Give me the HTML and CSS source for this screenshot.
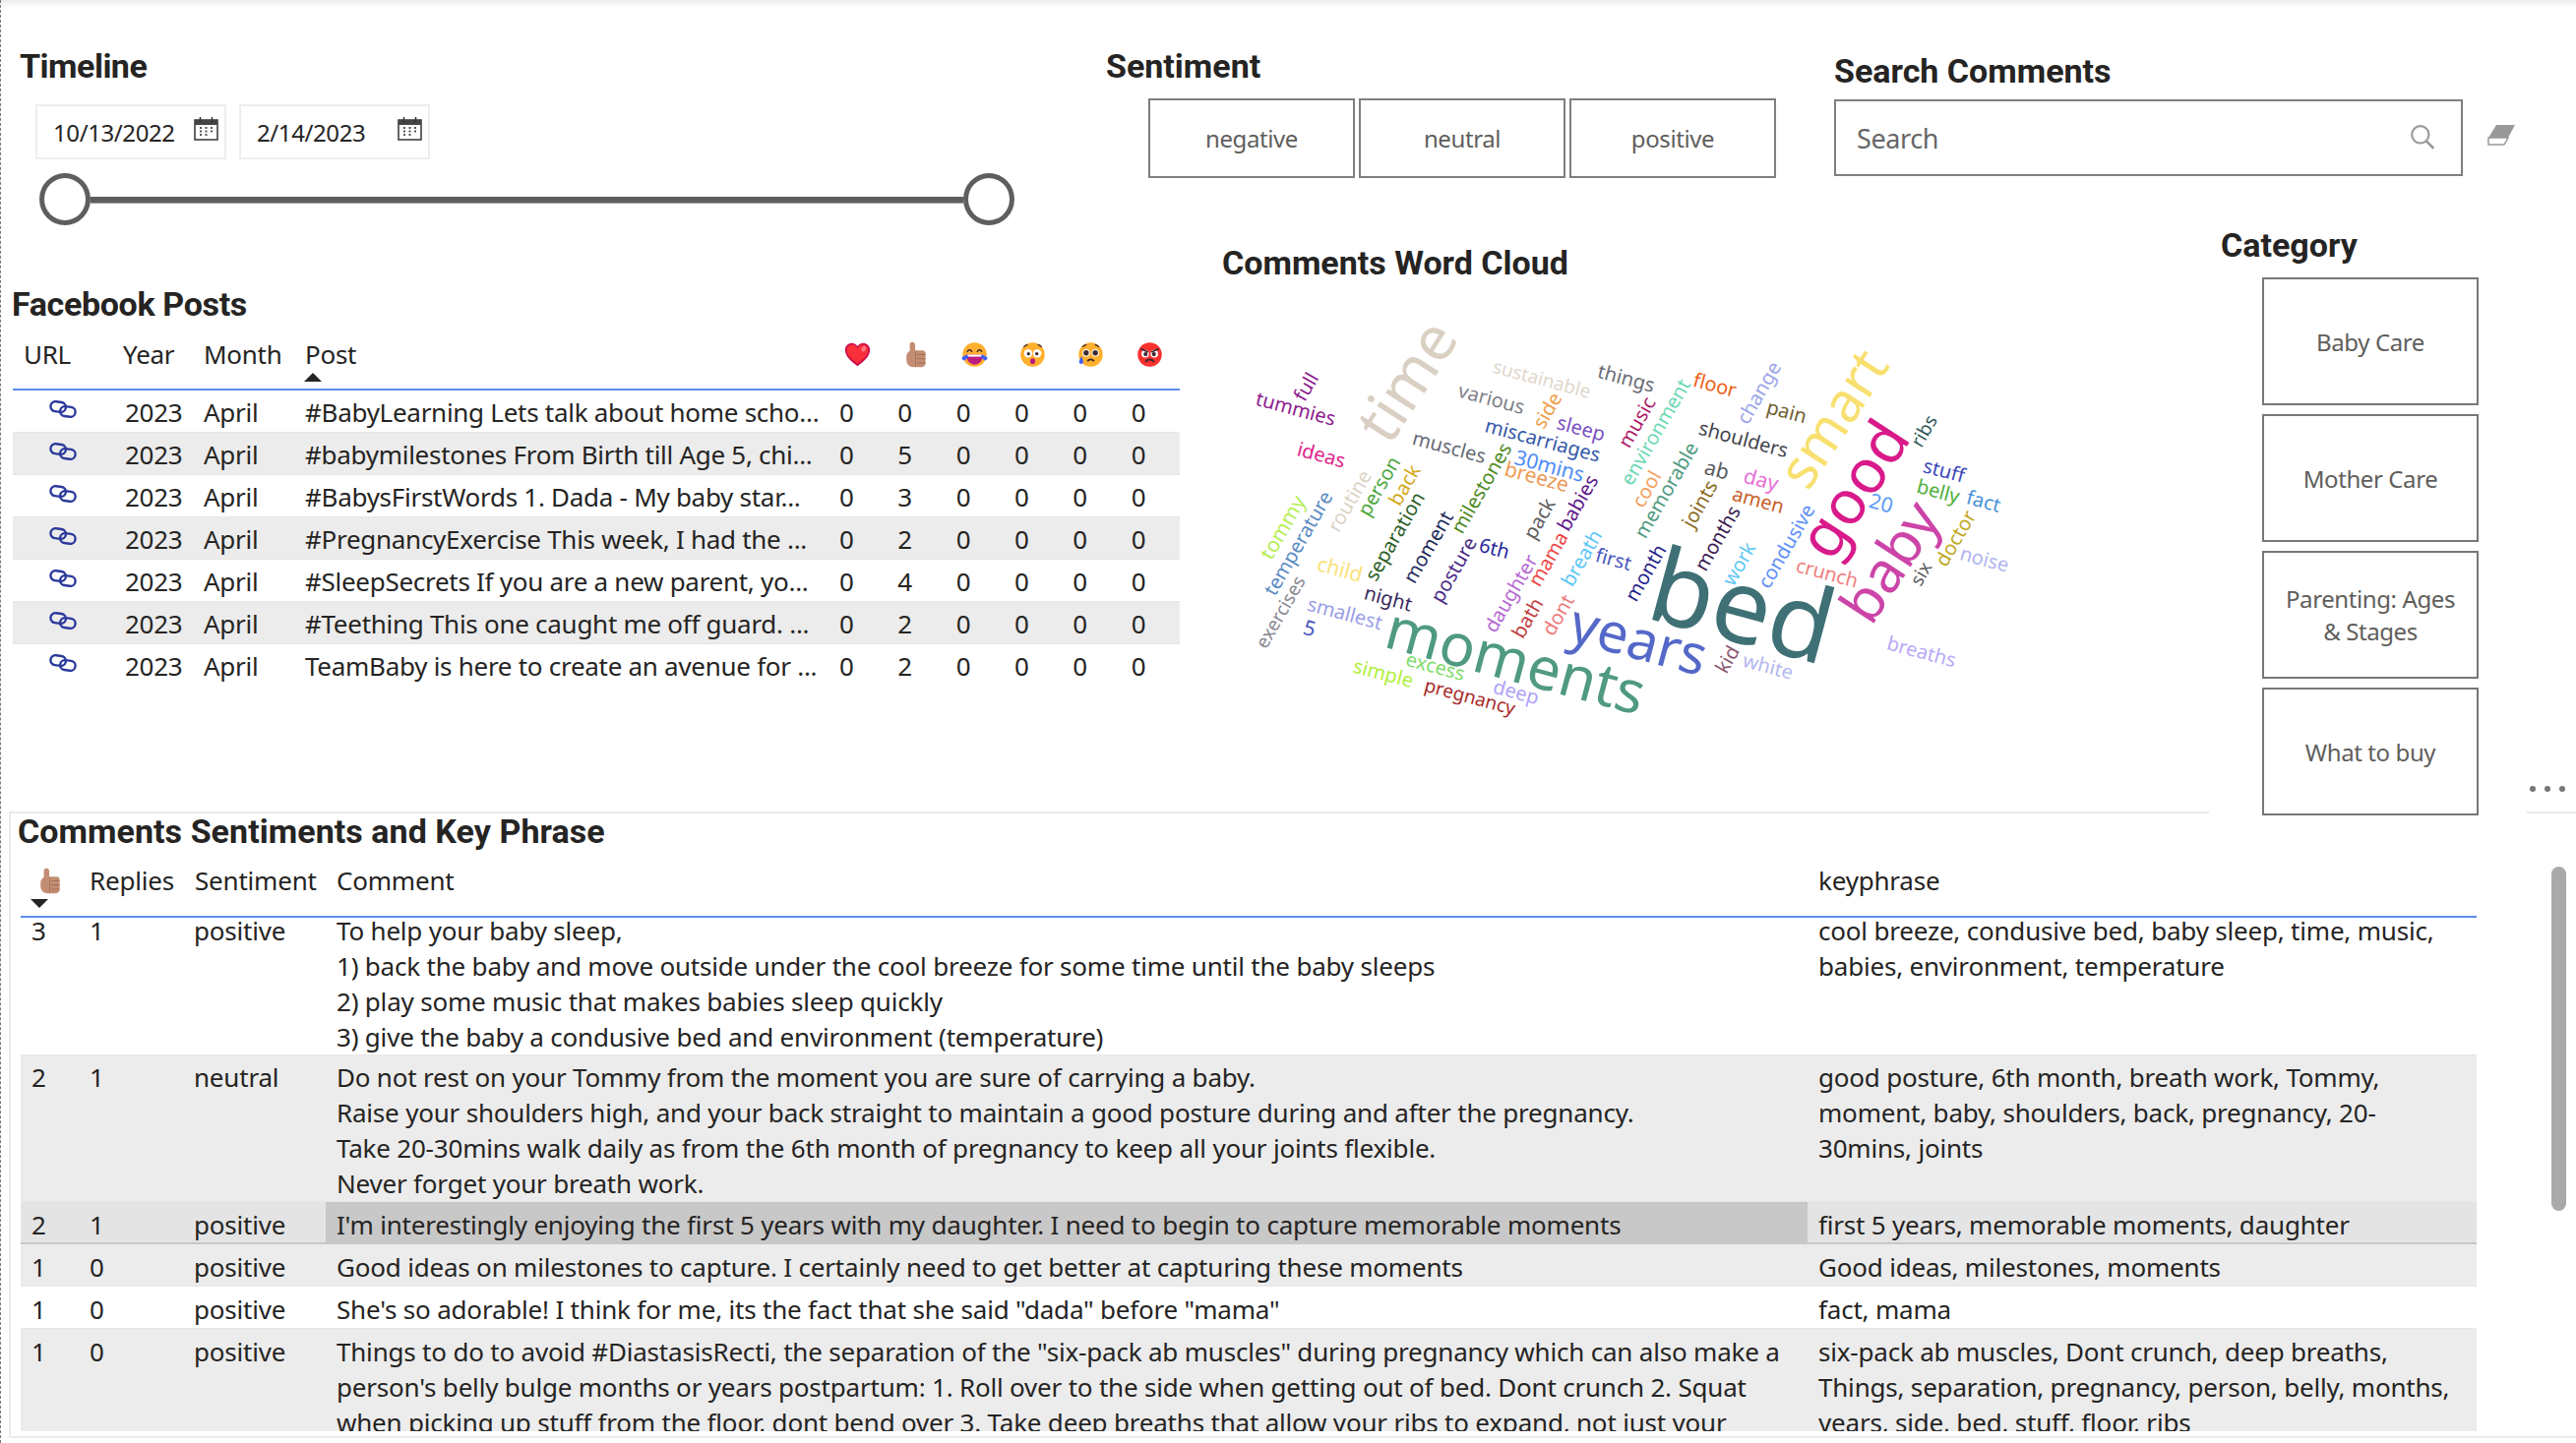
FILE: index.html
```html
<!DOCTYPE html>
<html lang="en">
<head>
    <meta charset="UTF-8">
    <title>Comments Dashboard</title>
    <link rel="stylesheet" href="styles.css">
</head>
<body>

<svg class="defs" width="0" height="0">
    <symbol id="i-link" viewBox="0 0 28 18">
        <rect x="1.5" y="1.5" width="15.5" height="10" rx="5" transform="rotate(8 9 6)" fill="none" stroke="#2b3a9c" stroke-width="2.4"/>
        <rect x="11" y="6.5" width="15.5" height="10" rx="5" transform="rotate(8 19 12)" fill="none" stroke="#2b3a9c" stroke-width="2.4"/>
    </symbol>
    <symbol id="i-cal" viewBox="0 0 25 24">
        <rect x="1" y="3" width="23" height="20" fill="#fff" stroke="#333" stroke-width="1.5"/>
        <rect x="1" y="3" width="23" height="5" fill="#444"/>
        <path d="M6.5 0v5M18.5 0v5" stroke="#333" stroke-width="1.5"/>
        <path d="M6 11h2M11.5 11h2M17 11h2M6 14.5h2M11.5 14.5h2M17 14.5h2M6 18h2M11.5 18h2" stroke="#555" stroke-width="2"/>
    </symbol>
    <symbol id="i-heart" viewBox="0 0 32 32">
        <path d="M16 30C8 24 1 18 1 10.500C1 5.500 5 2 9 2c3 0 5.500 1.500 7 4 1.500-2.500 4-4 7-4 4 0 8 3.500 8 8.500C31 18 24 24 16 30z" fill="#ca0b4a"/>
        <path d="M16 27C9 22 3 17 3 10.500C3 6.500 6 4 9.500 4c2.800 0 5 1.500 6.500 4.500C17.500 5.500 19.700 4 22.500 4 26 4 29 6.500 29 10.500 29 17 23 22 16 27z" fill="#f92f3c"/>
        <ellipse cx="23.500" cy="9" rx="2.500" ry="3.500" transform="rotate(30 23.500 9)" fill="#ff7a85"/>
    </symbol>
    <symbol id="i-thumb" viewBox="0 0 32 32">
        <path d="M12 1c2 0 3.500 1.500 3.500 3.500V11h9c2 0 3.500 1.500 3.500 3.500v12c0 2.500-2 4.500-4.500 4.500H13C8 31 5 27 5 22v-4c0-3 2-5 4-6.500V4.500C9 2.500 10 1 12 1z" fill="#c38d73"/>
        <path d="M18 16h10M18 21h10M18 26h10" stroke="#a06f58" stroke-width="1.300"/>
        <path d="M16 12v18" stroke="#a06f58" stroke-width="1"/>
    </symbol>
    <symbol id="i-laugh" viewBox="0 0 32 32">
        <circle cx="16" cy="16" r="14.500" fill="#ffb02e"/>
        <path d="M7 13c1-3.500 5-3.500 6 0M19 13c1-3.500 5-3.500 6 0" fill="none" stroke="#402a32" stroke-width="1.600"/>
        <path d="M6 16h20c0 7-4 12-10 12S6 23 6 16z" fill="#bb1d80"/>
        <path d="M7 16h18v2.500H7z" fill="#fff"/>
        <path d="M1 19l6-3 2 3-5 4c-3 0-4-2-3-4zM31 19l-6-3-2 3 5 4c3 0 4-2 3-4z" fill="#3f5fff"/>
    </symbol>
    <symbol id="i-wow" viewBox="0 0 32 32">
        <circle cx="16" cy="16" r="14.500" fill="#ffb02e"/>
        <circle cx="10.500" cy="14.500" r="5" fill="#fff"/>
        <circle cx="21.500" cy="14.500" r="5" fill="#fff"/>
        <circle cx="11" cy="15" r="2" fill="#402a32"/>
        <circle cx="21" cy="15" r="2" fill="#402a32"/>
        <path d="M5 7c1.500-2 3-2.500 5-3M27 7c-1.500-2-3-2.500-5-3" fill="none" stroke="#402a32" stroke-width="1.300"/>
        <ellipse cx="16" cy="24" rx="3" ry="3.500" fill="#bb1d80"/>
    </symbol>
    <symbol id="i-sad" viewBox="0 0 32 32">
        <circle cx="16" cy="16" r="14.500" fill="#ffb02e"/>
        <circle cx="10.500" cy="14" r="4.500" fill="#fff"/>
        <circle cx="21.500" cy="14" r="4.500" fill="#fff"/>
        <circle cx="10.500" cy="14" r="3.200" fill="#402a32"/>
        <circle cx="21.500" cy="14" r="3.200" fill="#402a32"/>
        <path d="M6 7c1.500-2 3-2.500 5-3M26 7c-1.500-2-3-2.500-5-3" fill="none" stroke="#402a32" stroke-width="1.300"/>
        <path d="M12 24c2-3 6-3 8 0" fill="none" stroke="#402a32" stroke-width="2"/>
        <path d="M5 18c-2 3-3 5-3 7 0 3 5 3 5 0 0-2-1-4-2-7z" fill="#3f5fff"/>
    </symbol>
    <symbol id="i-angry" viewBox="0 0 32 32">
        <circle cx="16" cy="16" r="14.500" fill="#f8312f"/>
        <circle cx="10.500" cy="15" r="4.500" fill="#fff"/>
        <circle cx="21.500" cy="15" r="4.500" fill="#fff"/>
        <circle cx="11" cy="15.500" r="2.500" fill="#402a32"/>
        <circle cx="21" cy="15.500" r="2.500" fill="#402a32"/>
        <path d="M5 9l9 4M27 9l-9 4" stroke="#402a32" stroke-width="2"/>
        <path d="M11 25c2-4 8-4 10 0" fill="none" stroke="#402a32" stroke-width="2.400"/>
    </symbol>
</svg>

<div class="page">
    <div class="topshadow"></div>

    <div class="row-a">
        <div class="timeline">
            <h2 class="title">Timeline</h2>
            <div class="dates">
                <div class="date">10/13/2022<svg class="cal"><use href="#i-cal"/></svg></div>
                <div class="date">2/14/2023<svg class="cal"><use href="#i-cal"/></svg></div>
            </div>
            <div class="slider">
                <span class="handle"></span>
                <span class="track"></span>
                <span class="handle"></span>
            </div>
        </div>
        <div class="sentiment">
            <h2 class="title">Sentiment</h2>
            <div class="chips">
                <div class="chip">negative</div>
                <div class="chip">neutral</div>
                <div class="chip">positive</div>
            </div>
        </div>
        <div class="search">
            <h2 class="title">Search Comments</h2>
            <div class="search-line">
                <div class="search-box">
                    <span>Search</span>
                    <svg class="search-icon" viewBox="0 0 24 24"><circle cx="10" cy="10" r="8" fill="none" stroke="#999" stroke-width="2"/><path d="M15.500 16l7 7" stroke="#999" stroke-width="2.500"/></svg>
                </div>
                <svg class="eraser" viewBox="0 0 28 21">
                    <path d="M9 0h19l-7 13H1z" fill="#999"/>
                    <path d="M1 13h20l-4 7H1z" fill="#fff" stroke="#999" stroke-width="1.500"/>
                </svg>
            </div>
        </div>
    </div>

    <div class="row-b">
        <div class="posts">
            <h2 class="title">Facebook Posts</h2>
            <table class="posts-table">
                <thead>
                    <tr>
                        <th>URL</th><th>Year</th><th>Month</th>
                        <th>Post<span class="sort-up"></span></th>
                        <th><svg class="emo"><use href="#i-heart"/></svg></th>
                        <th><svg class="emo"><use href="#i-thumb"/></svg></th>
                        <th><svg class="emo"><use href="#i-laugh"/></svg></th>
                        <th><svg class="emo"><use href="#i-wow"/></svg></th>
                        <th><svg class="emo"><use href="#i-sad"/></svg></th>
                        <th><svg class="emo"><use href="#i-angry"/></svg></th>
                    </tr>
                </thead>
                <tbody>
                    <tr><td class="url"><svg class="link"><use href="#i-link"/></svg></td><td>2023</td><td>April</td><td>#BabyLearning Lets talk about home scho...</td><td>0</td><td>0</td><td>0</td><td>0</td><td>0</td><td>0</td></tr>
                    <tr><td class="url"><svg class="link"><use href="#i-link"/></svg></td><td>2023</td><td>April</td><td>#babymilestones From Birth till Age 5, chi...</td><td>0</td><td>5</td><td>0</td><td>0</td><td>0</td><td>0</td></tr>
                    <tr><td class="url"><svg class="link"><use href="#i-link"/></svg></td><td>2023</td><td>April</td><td>#BabysFirstWords 1. Dada - My baby star...</td><td>0</td><td>3</td><td>0</td><td>0</td><td>0</td><td>0</td></tr>
                    <tr><td class="url"><svg class="link"><use href="#i-link"/></svg></td><td>2023</td><td>April</td><td>#PregnancyExercise This week, I had the ...</td><td>0</td><td>2</td><td>0</td><td>0</td><td>0</td><td>0</td></tr>
                    <tr><td class="url"><svg class="link"><use href="#i-link"/></svg></td><td>2023</td><td>April</td><td>#SleepSecrets If you are a new parent, yo...</td><td>0</td><td>4</td><td>0</td><td>0</td><td>0</td><td>0</td></tr>
                    <tr><td class="url"><svg class="link"><use href="#i-link"/></svg></td><td>2023</td><td>April</td><td>#Teething This one caught me off guard. ...</td><td>0</td><td>2</td><td>0</td><td>0</td><td>0</td><td>0</td></tr>
                    <tr><td class="url"><svg class="link"><use href="#i-link"/></svg></td><td>2023</td><td>April</td><td>TeamBaby is here to create an avenue for ...</td><td>0</td><td>2</td><td>0</td><td>0</td><td>0</td><td>0</td></tr>
                </tbody>
            </table>
        </div>

        <div class="cloud">
            <h2 class="title">Comments Word Cloud</h2>
            <svg class="cloud-svg" viewBox="1220 300 1025 470" width="1025" height="470">
                <text transform="translate(1772 613) rotate(15)" font-size="105" fill="#3f7076">bed</text>
                <text transform="translate(1541 670) rotate(15)" font-size="60" fill="#4f9a80">moments</text>
                <text transform="translate(1666 648) rotate(15)" font-size="56" fill="#5468c8">years</text>
                <text transform="translate(1428 386) rotate(-57)" font-size="62" fill="#d9d0c3">time</text>
                <text transform="translate(1861 424) rotate(-57)" font-size="56" fill="#f8e070">smart</text>
                <text transform="translate(1882 496) rotate(-57)" font-size="62" fill="#d81a8a">good</text>
                <text transform="translate(1919 570) rotate(-57)" font-size="58" fill="#cc44a8">baby</text>
                <text transform="translate(1317 415) rotate(15)" font-size="20" fill="#8e1a8e">tummies</text>
                <text transform="translate(1327 393) rotate(-60)" font-size="20" fill="#8e1a8e">full</text>
                <text transform="translate(1567 385) rotate(15)" font-size="19" fill="#e0d7cc">sustainable</text>
                <text transform="translate(1653 384) rotate(15)" font-size="20" fill="#6b6b75">things</text>
                <text transform="translate(1516 405) rotate(15)" font-size="20" fill="#7f7f88">various</text>
                <text transform="translate(1572 417) rotate(-60)" font-size="20" fill="#f0a04b">side</text>
                <text transform="translate(1607 435) rotate(15)" font-size="20" fill="#7a4fc4">sleep</text>
                <text transform="translate(1568 447) rotate(15)" font-size="20" fill="#3458a8">miscarriages</text>
                <text transform="translate(1473 454) rotate(15)" font-size="20" fill="#666a75">muscles</text>
                <text transform="translate(1575 473) rotate(15)" font-size="21" fill="#4d8cf5">30mins</text>
                <text transform="translate(1562 484) rotate(15)" font-size="21" fill="#ee9a55">breeze</text>
                <text transform="translate(1343 462) rotate(15)" font-size="20" fill="#e0218a">ideas</text>
                <text transform="translate(1505 496) rotate(-60)" font-size="20" fill="#4d8a1f">milestones</text>
                <text transform="translate(1603 511) rotate(-60)" font-size="20" fill="#5f1a8c">babies</text>
                <text transform="translate(1564 527) rotate(-60)" font-size="20" fill="#5d5d5d">pack</text>
                <text transform="translate(1401 494) rotate(-60)" font-size="20" fill="#4ea83e">person</text>
                <text transform="translate(1427 493) rotate(-60)" font-size="20" fill="#d4a91a">back</text>
                <text transform="translate(1371 509) rotate(-60)" font-size="20" fill="#dcd3c7">routine</text>
                <text transform="translate(1303 536) rotate(-60)" font-size="21" fill="#b6ee56">tommy</text>
                <text transform="translate(1319 552) rotate(-60)" font-size="20" fill="#5b8bc4">temperature</text>
                <text transform="translate(1417 545) rotate(-60)" font-size="20" fill="#2e5e28">separation</text>
                <text transform="translate(1451 556) rotate(-60)" font-size="20" fill="#1e2a5a">moment</text>
                <text transform="translate(1477 579) rotate(-60)" font-size="20" fill="#4a2a86">posture</text>
                <text transform="translate(1519 557) rotate(15)" font-size="20" fill="#26269a">6th</text>
                <text transform="translate(1640 568) rotate(15)" font-size="20" fill="#4a58c0">first</text>
                <text transform="translate(1607 567) rotate(-60)" font-size="20" fill="#5cc6f5">breath</text>
                <text transform="translate(1573 568) rotate(-60)" font-size="20" fill="#ec4646">mama</text>
                <text transform="translate(1535 603) rotate(-60)" font-size="20" fill="#b56ad4">daughter</text>
                <text transform="translate(1552 628) rotate(-60)" font-size="20" fill="#c04040">bath</text>
                <text transform="translate(1583 625) rotate(-60)" font-size="20" fill="#ee7a7a">dont</text>
                <text transform="translate(1362 578) rotate(15)" font-size="21" fill="#f8e27a">child</text>
                <text transform="translate(1411 608) rotate(15)" font-size="20" fill="#3a2a5e">night</text>
                <text transform="translate(1367 623) rotate(15)" font-size="20" fill="#9a9ee8">smallest</text>
                <text transform="translate(1331 638) rotate(15)" font-size="21" fill="#4a58c0">5</text>
                <text transform="translate(1301 622) rotate(-60)" font-size="19" fill="#888890">exercises</text>
                <text transform="translate(1459 677) rotate(15)" font-size="20" fill="#7fdc6a">excess</text>
                <text transform="translate(1406 684) rotate(15)" font-size="20" fill="#b0ef3c">simple</text>
                <text transform="translate(1494 708) rotate(15)" font-size="19" fill="#a82828">pregnancy</text>
                <text transform="translate(1541 703) rotate(15)" font-size="20" fill="#b0a2f5">deep</text>
                <text transform="translate(1743 391) rotate(15)" font-size="20" fill="#ee6018">floor</text>
                <text transform="translate(1787 399) rotate(-60)" font-size="20" fill="#9ca4ea">change</text>
                <text transform="translate(1816 418) rotate(15)" font-size="20" fill="#6e6030">pain</text>
                <text transform="translate(1663 429) rotate(-60)" font-size="20" fill="#b01a6a">music</text>
                <text transform="translate(1682 439) rotate(-60)" font-size="20" fill="#6cd8b4">environment</text>
                <text transform="translate(1772 446) rotate(15)" font-size="20" fill="#44444e">shoulders</text>
                <text transform="translate(1955 438) rotate(-60)" font-size="19" fill="#2e5a58">ribs</text>
                <text transform="translate(1976 478) rotate(15)" font-size="20" fill="#3a48b8">stuff</text>
                <text transform="translate(1970 499) rotate(15)" font-size="20" fill="#50ae3c">belly</text>
                <text transform="translate(2016 509) rotate(15)" font-size="20" fill="#4a90d8">fact</text>
                <text transform="translate(1912 511) rotate(15)" font-size="21" fill="#5b9af5">20</text>
                <text transform="translate(1987 547) rotate(-60)" font-size="20" fill="#c0a81e">doctor</text>
                <text transform="translate(2017 568) rotate(15)" font-size="20" fill="#b0b4f0">noise</text>
                <text transform="translate(1952 583) rotate(-60)" font-size="19" fill="#5c5c60">six</text>
                <text transform="translate(1857 582) rotate(15)" font-size="20" fill="#f08080">crunch</text>
                <text transform="translate(1815 555) rotate(-60)" font-size="20" fill="#5f90f8">condusive</text>
                <text transform="translate(1767 573) rotate(-60)" font-size="20" fill="#60c8f5">work</text>
                <text transform="translate(1745 547) rotate(-60)" font-size="20" fill="#3a1a50">months</text>
                <text transform="translate(1727 512) rotate(-60)" font-size="20" fill="#8a6a20">joints</text>
                <text transform="translate(1745 477) rotate(15)" font-size="21" fill="#5a5a60">ab</text>
                <text transform="translate(1790 487) rotate(15)" font-size="21" fill="#e870d8">day</text>
                <text transform="translate(1787 508) rotate(15)" font-size="20" fill="#c8602a">amen</text>
                <text transform="translate(1693 498) rotate(-60)" font-size="20" fill="#4f9a80">memorable</text>
                <text transform="translate(1673 497) rotate(-60)" font-size="20" fill="#f4a060">cool</text>
                <text transform="translate(1672 582) rotate(-60)" font-size="20" fill="#24248a">month</text>
                <text transform="translate(1755 670) rotate(-60)" font-size="20" fill="#8a5a70">kid</text>
                <text transform="translate(1797 677) rotate(15)" font-size="20" fill="#b4b8ee">white</text>
                <text transform="translate(1953 662) rotate(15)" font-size="20" fill="#b8a8f8">breaths</text>
            </svg>
        </div>

        <div class="category">
            <h2 class="title">Category</h2>
            <div class="cat-list">
                <div class="cat">Baby Care</div>
                <div class="cat">Mother Care</div>
                <div class="cat">Parenting: Ages &amp; Stages</div>
                <div class="cat">What to buy</div>
            </div>
        </div>

        <div class="more"><i></i><i></i><i></i></div>
    </div>

    <div class="comments">
        <h2 class="title">Comments Sentiments and Key Phrase</h2>
        <div class="comments-view">
            <table class="comments-table">
                <thead>
                    <tr>
                        <th class="thumb-head"><svg class="emo"><use href="#i-thumb"/></svg><span class="sort-down"></span></th>
                        <th>Replies</th><th>Sentiment</th><th>Comment</th><th>keyphrase</th>
                    </tr>
                </thead>
                <tbody>
                    <tr class="first">
                        <td><div>3</div></td><td><div>1</div></td><td><div>positive</div></td>
                        <td><div>To help your baby sleep,<br>1) back the baby and move outside under the cool breeze for some time until the baby sleeps<br>2) play some music that makes babies sleep quickly<br>3) give the baby a condusive bed and environment (temperature)</div></td>
                        <td><div>cool breeze, condusive bed, baby sleep, time, music, babies, environment, temperature</div></td>
                    </tr>
                    <tr class="tall">
                        <td>2</td><td>1</td><td>neutral</td>
                        <td>Do not rest on your Tommy from the moment you are sure of carrying a baby.<br>Raise your shoulders high, and your back straight to maintain a good posture during and after the pregnancy.<br>Take 20-30mins walk daily as from the 6th month of pregnancy to keep all your joints flexible.<br>Never forget your breath work.</td>
                        <td>good posture, 6th month, breath work, Tommy, moment, baby, shoulders, back, pregnancy, 20-30mins, joints</td>
                    </tr>
                    <tr class="selected">
                        <td>2</td><td>1</td><td>positive</td>
                        <td class="cell-on">I'm interestingly enjoying the first 5 years with my daughter. I need to begin to capture memorable moments</td>
                        <td>first 5 years, memorable moments, daughter</td>
                    </tr>
                    <tr class="grey">
                        <td>1</td><td>0</td><td>positive</td>
                        <td>Good ideas on milestones to capture. I certainly need to get better at capturing these moments</td>
                        <td>Good ideas, milestones, moments</td>
                    </tr>
                    <tr>
                        <td>1</td><td>0</td><td>positive</td>
                        <td>She's so adorable! I think for me, its the fact that she said "dada" before "mama"</td>
                        <td>fact, mama</td>
                    </tr>
                    <tr class="grey">
                        <td>1</td><td>0</td><td>positive</td>
                        <td>Things to do to avoid #DiastasisRecti, the separation of the "six-pack ab muscles" during pregnancy which can also make a person's belly bulge months or years postpartum: 1. Roll over to the side when getting out of bed. Dont crunch 2. Squat when picking up stuff from the floor, dont bend over 3. Take deep breaths that allow your ribs to expand, not just your belly</td>
                        <td>six-pack ab muscles, Dont crunch, deep breaths, Things, separation, pregnancy, person, belly, months, years, side, bed, stuff, floor, ribs</td>
                    </tr>
                </tbody>
            </table>
            <div class="scrollbar"></div>
        </div>
    </div>
</div>

</body>
</html>
```

FILE: styles.css
```css
html, body {
    margin: 0;
    padding: 0;
    background-color: white;
}
body {
    font-family: "Noto Sans", "Open Sans", sans-serif;
    font-size: 25px;
    color: #252423;
    letter-spacing: -0.4px;
}
.defs {
    position: absolute;
}
.page {
    position: relative;
    width: 2618px;
    height: 1467px;
    overflow: hidden;
}
/* dashed edge of the report canvas */
.page::before {
    content: "";
    position: absolute;
    left: 0;
    top: 0;
    bottom: 0;
    border-left: 1px dashed #777;
}
.topshadow {
    height: 8px;
    background: linear-gradient(#ececec, #fff);
}
.title {
    margin: 0;
    font-family: Roboto, sans-serif;
    font-size: 34px;
    font-weight: 700;
    line-height: 40px;
    letter-spacing: 0;
    color: #252423;
}

/* first row */
.row-a {
    display: grid;
    grid-template-columns: 1124px 740px 1fr;
    height: 221px;
}
.timeline {
    padding: 39px 0 0 20px;
}
.timeline .title {
    letter-spacing: -0.5px;
}
.dates {
    display: flex;
    gap: 13px;
    margin: 19px 0 0 16px;
}
.date {
    box-sizing: border-box;
    width: 194px;
    height: 56px;
    border: 2px solid #eee;
    display: flex;
    align-items: center;
    justify-content: space-between;
    padding: 1px 6px 0 16px;
    font-size: 24px;
}
.cal {
    width: 25px;
    height: 24px;
    margin-top: -7px;
}
.slider {
    display: flex;
    align-items: center;
    width: 991px;
    height: 53px;
    margin: 14px 0 0 20px;
}
.handle {
    box-sizing: border-box;
    width: 52px;
    height: 53px;
    border: 5px solid #605e5c;
    border-radius: 50%;
}
.track {
    flex: 1;
    height: 6px;
    margin-top: 1px;
    background-color: #605e5c;
    border-bottom: 1px solid #a19f9d;
}
.sentiment {
    padding-top: 39px;
}
.chips {
    display: flex;
    gap: 4px;
    margin: 13px 0 0 43px;
}
.chip {
    box-sizing: border-box;
    width: 210px;
    height: 81px;
    border: 2px solid #807f7d;
    display: flex;
    align-items: center;
    justify-content: center;
    color: #605e5c;
    font-size: 24px;
}
.search {
    padding-top: 44px;
}
.search-line {
    display: flex;
    align-items: flex-start;
    margin-top: 9px;
}
.search-box {
    box-sizing: border-box;
    width: 639px;
    height: 78px;
    border: 2px solid #807f7d;
    display: flex;
    align-items: center;
    justify-content: space-between;
    padding: 0 26px 0 21px;
    color: #666;
    font-size: 27px;
}
.search-icon {
    width: 26px;
    height: 26px;
    margin-top: -3px;
}
.eraser {
    width: 28px;
    height: 21px;
    margin: 26px 0 0 25px;
}

/* second row */
.row-b {
    display: grid;
    grid-template-columns: 1220px 1025px 323px 50px;
    height: 596px;
}
.posts {
    padding: 60px 0 0 12px;
}
.posts .title {
    letter-spacing: -0.35px;
    margin-bottom: 2px;
}
.posts-table {
    table-layout: fixed;
    border-collapse: collapse;
    width: 1186px;
    margin-left: 1px;
    font-size: 26px;
    letter-spacing: -0.28px;
}
.posts-table th:nth-child(1) { width: 101px; }
.posts-table th:nth-child(2) { width: 82px; }
.posts-table th:nth-child(3) { width: 103px; }
.posts-table th:nth-child(4) { width: 544px; }
.posts-table th {
    position: relative;
    height: 65px;
    padding: 11px 11px 0;
    box-sizing: border-box;
    border-bottom: 2px solid #5b8def;
    font-weight: 400;
    text-align: left;
    vertical-align: top;
    line-height: 36px;
}
.posts-table th:nth-child(n+5) {
    padding: 15px 2px 0 0;
    text-align: center;
}
.posts-table td {
    height: 41px;
    padding: 1px 11px 0;
    border-bottom: 1px solid #e6e6e6;
    white-space: nowrap;
    overflow: hidden;
}
.posts-table td:nth-child(2) {
    padding-left: 13px;
}
.posts-table td:nth-child(n+5) {
    padding-left: 10px;
}
.posts-table tbody tr:last-child td {
    border-bottom: none;
}
.posts-table tbody tr:nth-child(even) {
    background-color: #ececec;
}
.posts-table .url {
    padding: 0;
    text-align: center;
    vertical-align: top;
}
.link {
    width: 28px;
    height: 18px;
    margin-top: 9px;
}
.emo {
    width: 27px;
    height: 27px;
}
.sort-up, .sort-down {
    position: absolute;
    width: 0;
    height: 0;
    border-left: 9px solid transparent;
    border-right: 9px solid transparent;
}
.sort-up {
    left: 10px;
    top: 48px;
    border-bottom: 9px solid #252423;
}
.sort-down {
    border-top: 9px solid #252423;
}
.cloud {
    padding: 18px 0 0 22px;
}
.cloud-svg {
    display: block;
    margin: 13px 0 0 -22px;
    font-family: "Noto Sans", sans-serif;
    letter-spacing: 0;
}
.cloud-svg text {
    text-anchor: middle;
    dominant-baseline: central;
}
.category {
    position: relative;
    z-index: 1;
    height: 603px;
    background-color: white;
    padding: 0 0 0 12px;
}
.cat-list {
    display: flex;
    flex-direction: column;
    gap: 9px;
    margin: 13px 0 0 42px;
}
.cat {
    box-sizing: border-box;
    width: 220px;
    height: 130px;
    border: 2px solid #777;
    display: flex;
    align-items: center;
    justify-content: center;
    padding: 0 18px;
    text-align: center;
    line-height: 33px;
    color: #605e5c;
    font-size: 24px;
}
.more {
    display: flex;
    gap: 9px;
    align-self: end;
    margin: 0 0 27px 3px;
}
.more i {
    width: 6px;
    height: 6px;
    border-radius: 50%;
    background-color: #777;
}

/* comments table */
.comments {
    margin-left: 9px;
    height: 637px;
    box-sizing: border-box;
    border-top: 2px solid #ebebeb;
    border-left: 2px solid #ebebeb;
    border-bottom: 2px solid #ebebeb;
    padding: 0 0 0 7px;
}
.comments .title {
    height: 40px;
    margin-top: -2px;
    margin-bottom: 2px;
    letter-spacing: 0.05px;
}
.comments-view {
    position: relative;
    height: 588px;
    overflow: hidden;
    margin-left: 3px;
}
.comments-table {
    table-layout: fixed;
    border-collapse: collapse;
    width: 2496px;
    font-size: 26px;
    line-height: 36px;
    letter-spacing: -0.2px;
}
.comments-table th:nth-child(1) { width: 59px; }
.comments-table th:nth-child(2) { width: 107px; }
.comments-table th:nth-child(3) { width: 144px; }
.comments-table th:nth-child(4) { width: 1506px; }
.comments-table th {
    position: relative;
    height: 65px;
    padding: 10px 11px 0;
    box-sizing: border-box;
    border-bottom: 2px solid #5b8def;
    font-weight: 400;
    text-align: left;
    vertical-align: top;
}
.comments-table .thumb-head {
    padding: 14px 0 0 16px;
}
.comments-table .sort-down {
    left: 10px;
    top: 47px;
}
.comments-table td {
    padding: 5px 11px 1px;
    vertical-align: top;
    border-bottom: 1px solid #e6e6e6;
}
.comments-table td:nth-child(3) {
    padding-left: 10px;
}
.comments-table td:nth-child(4) {
    padding-right: 26px;
}
.comments-table td:nth-child(5) {
    padding-right: 20px;
}
.comments-table .first td {
    padding-top: 0;
    padding-bottom: 0;
}
.comments-table .first td div {
    margin-top: -5px;
}
.comments-table .tall td {
    padding-top: 4px;
    padding-bottom: 0;
    background-color: #ececec;
}
.comments-table .grey {
    background-color: #ececec;
}
.comments-table .selected {
    background-color: #e4e4e4;
}
.comments-table .selected td {
    padding-bottom: 0;
    border-bottom: 2px solid #c8c8c8;
}
.comments-table .selected .cell-on {
    background-color: #c8c8c8;
}
.scrollbar {
    position: absolute;
    left: 2572px;
    top: 14px;
    width: 15px;
    height: 350px;
    border-radius: 8px;
    background-color: #a9a9a9;
}
```
